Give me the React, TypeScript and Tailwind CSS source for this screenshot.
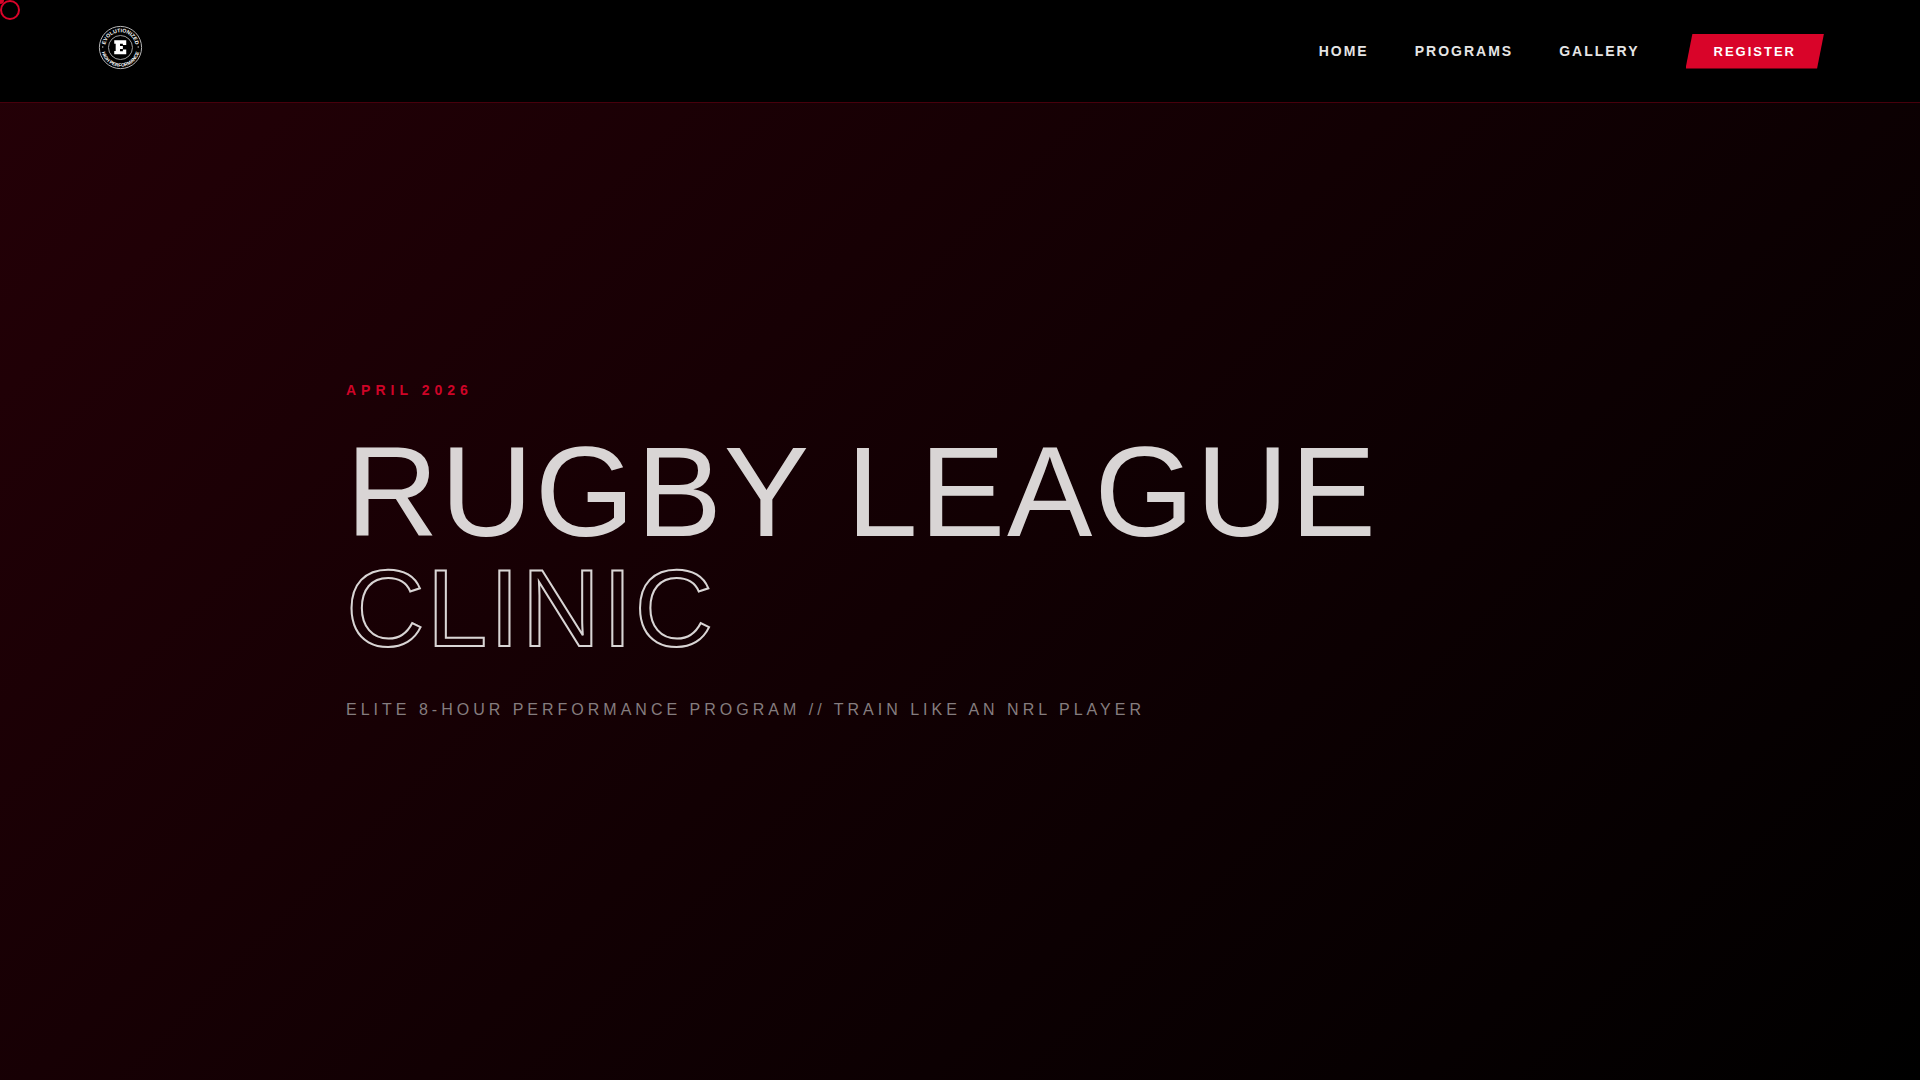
import React from 'react';

interface NavLink {
  label: string;
  href: string;
}

const navLinks: NavLink[] = [
  { label: 'HOME', href: '#home' },
  { label: 'PROGRAMS', href: '#programs' },
  { label: 'GALLERY', href: '#gallery' }
];

const Logo = () => (
  <svg viewBox="0 0 100 100" className="size-12" role="img" aria-label="Evolutionized High Performance">
    <defs>
      <path id="logo-top" d="M 19 49 A 32 32 0 0 1 83 49" />
      <path id="logo-bottom" d="M 11 49 A 40 40 0 0 0 91 49" />
    </defs>
    <circle cx="51" cy="49" r="44" fill="none" stroke="#bdbdbd" strokeWidth="2" />
    <circle cx="51" cy="49" r="25" fill="none" stroke="#a3a3a3" strokeWidth="2" />
    <g fill="#ffffff" fontFamily="'Liberation Sans', Arial, sans-serif" fontWeight="700" textAnchor="middle">
      <text fontSize="11">
        <textPath href="#logo-top" startOffset="50%">EVOLUTIONIZED</textPath>
      </text>
      <text fontSize="10">
        <textPath href="#logo-bottom" startOffset="50%">HIGH PERFORMANCE</textPath>
      </text>
    </g>
    <circle cx="14" cy="48" r="1.5" fill="#c5c5c5" />
    <circle cx="88" cy="48" r="1.5" fill="#c5c5c5" />
    <path
      d="M38 34H63V44H56V41H50V46H56V52H50V57H56V53H63V63H38V56H41V41H38Z"
      fill="#ffffff"
    />
  </svg>
);

const Cursor = () => (
  <div className="pointer-events-none" aria-hidden="true">
    <div className="fixed -left-1 -top-1 z-50 size-2 rounded-full bg-[#d90429]" />
    <div className="fixed left-0 top-0 z-50 size-5 rounded-full border-2 border-[#d90429]" />
  </div>
);

const Header = () => (
  <header className="flex items-center justify-between border-b border-[#47000c] bg-black px-[5%] py-6">
    <a href="#home" className="block h-[54px]">
      <Logo />
    </a>
    <nav className="flex items-center gap-[46px] text-sm leading-[15px] font-bold tracking-[2px] text-[#e5e5e5]">
      {navLinks.map((link) => (
        <a key={link.label} href={link.href} className="hover:text-[#d90429]">
          {link.label}
        </a>
      ))}
      <a
        href="#register"
        className="bg-[#d90429] px-7 py-[10px] text-[13px] leading-[15px] text-white [clip-path:polygon(5%_0,100%_0,95%_100%,0_100%)]"
      >
        REGISTER
      </a>
    </nav>
  </header>
);

const Hero = () => (
  <main className="mx-auto flex w-full max-w-[1228px] flex-1 flex-col justify-center pb-20">
    <p className="text-sm leading-4 font-bold tracking-[5px] text-[#cf0427]">APRIL 2026</p>
    <h1 className="mt-9 text-[128px] leading-[116px] tracking-[2px] text-[#d9d5d5]">
      RUGBY LEAGUE
      <span className="block text-[109px] text-transparent [-webkit-text-stroke:2px_#d9d5d5]">CLINIC</span>
    </h1>
    <p className="mt-8 text-base tracking-[4px] text-[#857d7f]">
      ELITE 8-HOUR PERFORMANCE PROGRAM // TRAIN LIKE AN NRL PLAYER
    </p>
  </main>
);

const App = () => {
  return (
    <div className="flex min-h-screen flex-col bg-linear-135/srgb from-[#250007] via-[#120003] to-black font-['Liberation_Sans',Arial,sans-serif]">
      <Cursor />
      <Header />
      <Hero />
    </div>
  );
};

export default App;
